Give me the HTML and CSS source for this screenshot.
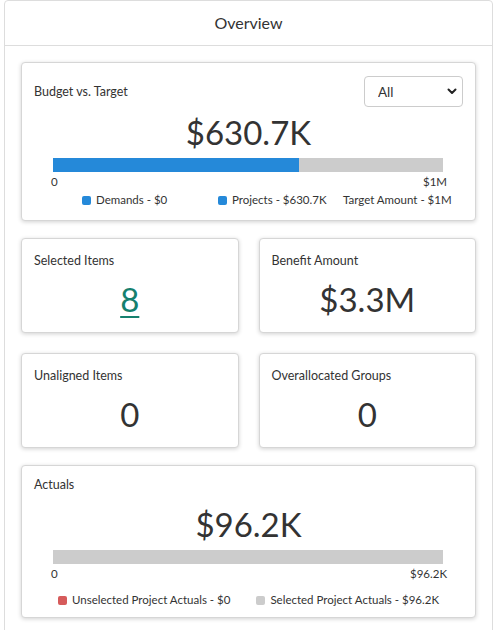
FILE: index.html
```html
<!DOCTYPE html>
<html>
<head>
    <meta charset="UTF-8">
    <meta name="viewport" content="width=device-width, initial-scale=1.0">
    <title>Overview</title>
    <link rel="stylesheet" href="styles.css">
</head>
<body>
    <div class="panel">
        <div class="panel-header">Overview</div>
        <div class="panel-body">
            <div class="card card-budget">
                <div class="card-head">
                    <span class="card-title">Budget vs. Target</span>
                    <div class="select-wrap">
                        <select class="filter">
                            <option>All</option>
                            <option>Demands</option>
                            <option>Projects</option>
                        </select>
                        <svg class="chevron" width="10" height="7" viewBox="0 0 10 7">
                            <path d="M1.5 1.5 L5 5 L8.5 1.5" fill="none" stroke="#222" stroke-width="2" stroke-linecap="round" stroke-linejoin="round"/>
                        </svg>
                    </div>
                </div>
                <div class="big-value">$630.7K</div>
                <div class="chart">
                    <div class="bar"><div class="bar-fill" style="width: 63.07%"></div></div>
                    <div class="axis"><span>0</span><span>$1M</span></div>
                </div>
                <div class="legend legend-budget">
                    <span class="legend-item"><i class="swatch swatch-blue"></i>Demands - $0</span>
                    <span class="legend-item"><i class="swatch swatch-blue"></i>Projects - $630.7K</span>
                    <span class="legend-item">Target Amount - $1M</span>
                </div>
            </div>

            <div class="stat-grid">
                <div class="card stat-card">
                    <span class="card-title">Selected Items</span>
                    <a class="stat-value stat-link" href="#">8</a>
                </div>
                <div class="card stat-card">
                    <span class="card-title">Benefit Amount</span>
                    <span class="stat-value">$3.3M</span>
                </div>
                <div class="card stat-card">
                    <span class="card-title">Unaligned Items</span>
                    <span class="stat-value">0</span>
                </div>
                <div class="card stat-card">
                    <span class="card-title">Overallocated Groups</span>
                    <span class="stat-value">0</span>
                </div>
            </div>

            <div class="card card-actuals">
                <span class="card-title">Actuals</span>
                <div class="big-value">$96.2K</div>
                <div class="chart">
                    <div class="bar"></div>
                    <div class="axis"><span>0</span><span>$96.2K</span></div>
                </div>
                <div class="legend legend-actuals">
                    <span class="legend-item"><i class="swatch swatch-red"></i>Unselected Project Actuals - $0</span>
                    <span class="legend-item"><i class="swatch swatch-grey"></i>Selected Project Actuals - $96.2K</span>
                </div>
            </div>
        </div>
    </div>
</body>
</html>
```

FILE: styles.css
```css
* {
    box-sizing: border-box;
}
html, body {
    overflow: hidden;
}
body {
    margin: 0;
    background-color: #fff;
    font-family: Lato, "Open Sans", sans-serif;
    color: #333;
}
.panel {
    margin-left: 4px;
    border: 1px solid #ddd;
    border-radius: 4px;
    background-color: #fff;
}
.panel-header {
    height: 45px;
    line-height: 44px;
    text-align: center;
    font-size: 16px;
    border-bottom: 1px solid #ddd;
}
.panel-body {
    padding: 16px 16px 20px;
}
.card {
    border: 1px solid #d6d6d6;
    border-radius: 4px;
    background-color: #fff;
    box-shadow: 0 1px 4px rgba(0,0,0,0.18);
}
.card-title {
    display: block;
    font-size: 12.5px;
    line-height: 18px;
}
.card-budget {
    height: 159px;
    padding: 13px 12px 0;
}
.card-head {
    display: flex;
    align-items: center;
    justify-content: space-between;
}
.select-wrap {
    position: relative;
}
.filter {
    appearance: none;
    -webkit-appearance: none;
    display: block;
    width: 99px;
    height: 31px;
    padding: 0 13px;
    border: 1px solid #ccc;
    border-radius: 4px;
    background-color: #fff;
    font-family: inherit;
    font-size: 13.5px;
    color: #333;
}
.chevron {
    position: absolute;
    right: 6px;
    top: 12px;
    pointer-events: none;
}
.big-value {
    text-align: center;
    font-size: 33px;
    line-height: 40px;
    margin-top: 5px;
}
.chart {
    margin: 6px 20px 0 19px;
}
.bar {
    height: 14px;
    background-color: #ccc;
}
.bar-fill {
    height: 100%;
    background-color: #2589d9;
}
.axis {
    display: flex;
    justify-content: space-between;
    font-size: 11.5px;
    line-height: 16px;
    padding-top: 2px;
    margin: 0 -4px 0 -2px;
}
.legend {
    display: flex;
    align-items: center;
    font-size: 11.5px;
    line-height: 16px;
}
.legend-item {
    display: flex;
    align-items: center;
    white-space: nowrap;
}
.swatch {
    width: 9px;
    height: 9px;
    border-radius: 2px;
    margin-right: 5px;
}
.swatch-blue { background-color: #2589d9; }
.swatch-red { background-color: #d65b5b; }
.swatch-grey { background-color: #ccc; }
.legend-budget {
    margin-top: 2px;
    padding-left: 48px;
}
.legend-budget .legend-item:nth-child(1) { width: 136px; }
.legend-budget .legend-item:nth-child(2) { width: 125px; }
.stat-grid {
    display: grid;
    grid-template-columns: 1fr 1fr;
    gap: 20px;
    margin: 17px 0 17px;
}
.stat-card {
    height: 95px;
    padding: 13px 12px 0;
}
.stat-value {
    display: block;
    width: max-content;
    margin: 9px auto 0;
    font-size: 33px;
    line-height: 40px;
    color: #333;
}
.stat-link {
    color: #15806e;
    text-decoration: underline;
    text-decoration-thickness: 2px;
    text-underline-offset: 4px;
}
.card-actuals {
    height: 153px;
    padding: 10px 12px 0;
}
.card-actuals .big-value {
    margin-top: 10px;
}
.legend-actuals {
    justify-content: center;
    gap: 26px;
    margin-top: 10px;
}
```
